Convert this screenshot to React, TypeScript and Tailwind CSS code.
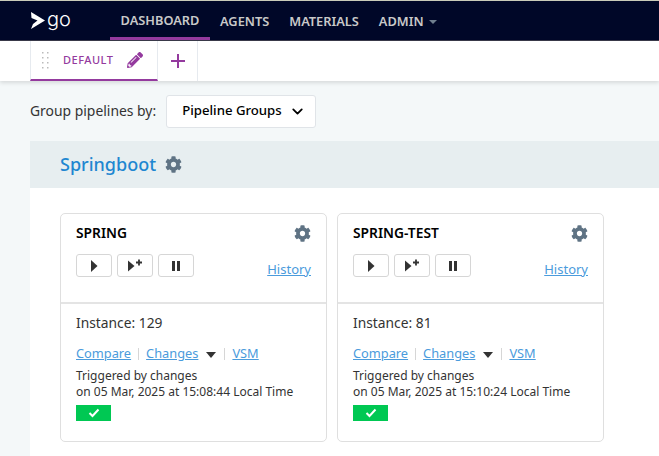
import { ChevronDown } from 'lucide-react';
import { FaCog, FaPencilAlt } from 'react-icons/fa';

const navItems = ['AGENTS', 'MATERIALS'];

function PlayIcon({ plus }: { plus?: boolean }) {
  return (
    <svg width="18" height="14" viewBox="0 0 18 14" className="block">
      {plus ? (
        <>
          <path d="M2 1.500l6.500 5.500L2 12.500z" fill="#333" />
          <path d="M10 3.500h6M13 .5v6" stroke="#333" strokeWidth="1.800" />
        </>
      ) : (
        <path d="M6 1l6.500 6L6 13z" fill="#333" />
      )}
    </svg>
  );
}

function PipelineCard({
  name,
  instance,
  time,
}: {
  name: string;
  instance: number;
  time: string;
}) {
  return (
    <div className="w-[267px] h-[229px] bg-white border border-[#dfdfdf] rounded-[5px]">
      <div className="h-[90px] border-b-2 border-[#e4e4e4] pl-[15px] pr-[15px] pt-[9px]">
        <div className="flex items-center justify-between h-[20px]">
          <h3 className="text-[13.800px] font-semibold text-black">{name}</h3>
          <FaCog className="w-[17px] h-[17px] text-[#5f7384]" />
        </div>
        <div className="flex items-start justify-between mt-[11px]">
          <div className="flex gap-[5px]">
            <button className="w-[36px] h-[23px] border border-[#d6d6d6] rounded-[3px] flex items-center justify-center">
              <PlayIcon />
            </button>
            <button className="w-[36px] h-[23px] border border-[#d6d6d6] rounded-[3px] flex items-center justify-center">
              <PlayIcon plus />
            </button>
            <button className="w-[36px] h-[23px] border border-[#d6d6d6] rounded-[3px] flex items-center justify-center">
              <span className="flex gap-[2px]">
                <span className="w-[3px] h-[10px] bg-[#333]" />
                <span className="w-[3px] h-[10px] bg-[#333]" />
              </span>
            </button>
          </div>
          <a className="mt-[6px] text-[13px] leading-[18px] text-[#4a9bdc] underline">History</a>
        </div>
      </div>
      <div className="px-[15px] pt-[9px]">
        <p className="text-[13.800px] leading-[20px] text-[#333]">Instance: {instance}</p>
        <div className="flex items-center mt-[12px] h-[18px] text-[12.800px] text-[#4a9bdc]">
          <a className="underline">Compare</a>
          <span className="w-px h-[12px] bg-[#d6d6d6] mx-[7px]" />
          <a className="underline">Changes</a>
          <span className="ml-[8px] mr-[8px] mt-[2px] border-x-[5.500px] border-x-transparent border-t-[6px] border-t-[#333]" />
          <span className="w-px h-[12px] bg-[#d6d6d6] mr-[7px]" />
          <a className="underline">VSM</a>
        </div>
        <p className="mt-[5px] text-[12px] leading-[16px] text-[#333]">Triggered by changes</p>
        <p className="text-[12px] leading-[16px] text-[#333] whitespace-nowrap">on {time} Local Time</p>
        <div className="w-[35px] h-[16px] mt-[5px] bg-[#00c853] flex items-center justify-center">
          <svg width="12" height="10" viewBox="0 0 12 10">
            <path d="M1.500 5l3 3 6-6.500" fill="none" stroke="#fff" strokeWidth="2" />
          </svg>
        </div>
      </div>
    </div>
  );
}

export default function App() {
  return (
    <div className="w-[659px] h-[456px] overflow-hidden bg-[#f4f8f9] font-['Noto_Sans','Open_Sans',sans-serif]">
      <div className="h-px bg-[#c9cbb9]" />
      <nav className="h-[40px] bg-[#000728] flex items-center border-b border-[#3a3a4a]">
        <div className="w-[110px] pl-[30px] flex items-center gap-[2px]">
          <svg width="15" height="17" viewBox="0 0 15 17">
            <path d="M1 0l14 8.500L1 17l2-5 4.500-3.500L1.500 6z" fill="#fff" />
          </svg>
          <span className="text-[20px] leading-none text-white font-['Inter',sans-serif] font-light -mt-[4px]">go</span>
        </div>
        <a className="w-[100px] h-full flex items-center justify-center text-[12.800px] font-semibold text-[#c9c9c9] border-b-[3px] border-[#943a9e] pt-[4px]">
          DASHBOARD
        </a>
        {navItems.map((item) => (
          <a key={item} className="px-[10px] mt-[2px] text-[12.800px] font-semibold text-[#c9c9c9]">
            {item}
          </a>
        ))}
        <a className="px-[10px] mt-[2px] flex items-center gap-[5px] text-[12.800px] font-semibold text-[#c9c9c9]">
          ADMIN
          <span className="border-x-[4px] border-x-transparent border-t-[4px] border-t-[#6f7f8f]" />
        </a>
      </nav>
      <div className="h-[40px] bg-white flex pl-[30px] shadow-[0_2px_4px_rgba(0,0,0,0.12)]">
        <div className="w-[128px] h-full border-x border-[#e6eaef] border-b-2 border-b-[#943a9e] flex items-center pl-[10px]">
          <svg width="10" height="20" viewBox="0 0 10 20" className="text-[#bbb]">
            {[2, 7, 12, 17].map((y) => (
              <g key={y}>
                <rect x="1" y={y} width="1.500" height="1.500" fill="currentColor" />
                <rect x="6" y={y} width="1.500" height="1.500" fill="currentColor" />
              </g>
            ))}
          </svg>
          <span className="ml-[12px] text-[11px] font-medium tracking-[0.5px] text-[#943a9e]">DEFAULT</span>
          <FaPencilAlt className="ml-[14px] w-[16px] h-[16px] text-[#943a9e]" />
        </div>
        <div className="w-[40px] h-full border-r border-[#e6eaef] flex items-center justify-center">
          <svg width="14" height="14" viewBox="0 0 14 14">
            <path d="M7 0v14M0 7h14" stroke="#943a9e" strokeWidth="2" />
          </svg>
        </div>
      </div>
      <div className="h-[60px] flex items-center pl-[30px]">
        <span className="text-[13.900px] text-[#333]">Group pipelines by:</span>
        <button className="ml-[10px] w-[150px] h-[33px] pl-[15px] bg-white border border-[#e0e4e8] rounded-[3px] flex items-center gap-[7px] text-[13.200px] font-medium text-black">
          Pipeline Groups
          <ChevronDown className="w-[17px] h-[17px]" strokeWidth={2.5} />
        </button>
      </div>
      <section className="ml-[30px] bg-white h-[315px]">
        <div className="h-[47px] bg-[#e7eef0] flex items-center pl-[30px] gap-[9px]">
          <h2 className="text-[18px] font-medium text-[#1f87d1]">Springboot</h2>
          <FaCog className="w-[17px] h-[17px] text-[#5f7384]" />
        </div>
        <div className="flex gap-[10px] pl-[30px] pt-[25px]">
          <PipelineCard name="SPRING" instance={129} time="05 Mar, 2025 at 15:08:44" />
          <PipelineCard name="SPRING-TEST" instance={81} time="05 Mar, 2025 at 15:10:24" />
        </div>
      </section>
    </div>
  );
}
